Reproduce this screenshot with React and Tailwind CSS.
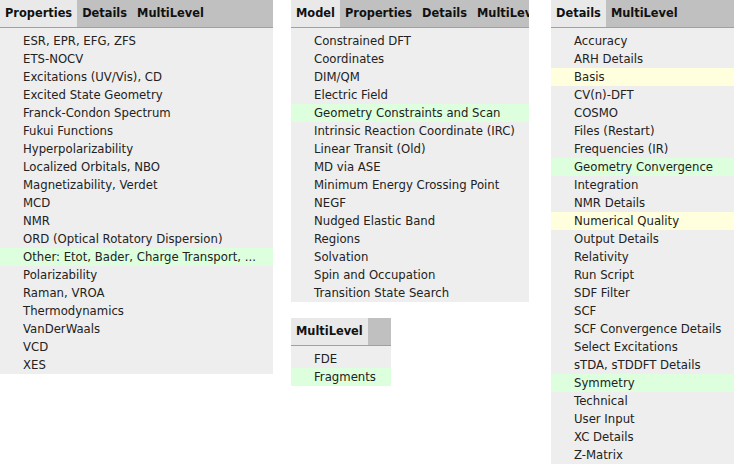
import React from 'react'

const Panel = ({ tabs, items, width, className = '' }) => {
    return (
        <div className={`flex flex-col bg-[#eeeeee] shrink-0 overflow-hidden ${className}`} style={{ width }}>
            <div className="flex h-[28px] bg-[#c0c0c0] border-b border-[#a0a0a0] overflow-hidden whitespace-nowrap">
                {tabs.map((t, i) => (
                    <div key={t} className={`shrink-0 px-[5px] pt-[1px] h-full flex items-center font-bold text-[11.4px] text-[#111] ${i === 0 ? 'bg-[#e9e9e9]' : ''}`}>
                        {t}
                    </div>
                ))}
            </div>
            <ul className="pt-[4px]">
                {items.map(([label, hl]) => (
                    <li key={label} className={`h-[18px] pl-[23px] pt-[1px] flex items-center text-[11.7px] text-[#222] whitespace-nowrap ${hl === 'g' ? 'bg-[#ddffdd]' : hl === 'y' ? 'bg-[#ffffdd]' : ''}`}>
                        {label}
                    </li>
                ))}
            </ul>
        </div>
    )
}

const properties = [
    ['ESR, EPR, EFG, ZFS'], ['ETS-NOCV'], ['Excitations (UV/Vis), CD'], ['Excited State Geometry'],
    ['Franck-Condon Spectrum'], ['Fukui Functions'], ['Hyperpolarizability'], ['Localized Orbitals, NBO'],
    ['Magnetizability, Verdet'], ['MCD'], ['NMR'], ['ORD (Optical Rotatory Dispersion)'],
    ['Other: Etot, Bader, Charge Transport, ...', 'g'], ['Polarizability'], ['Raman, VROA'],
    ['Thermodynamics'], ['VanDerWaals'], ['VCD'], ['XES'],
]

const model = [
    ['Constrained DFT'], ['Coordinates'], ['DIM/QM'], ['Electric Field'],
    ['Geometry Constraints and Scan', 'g'], ['Intrinsic Reaction Coordinate (IRC)'], ['Linear Transit (Old)'],
    ['MD via ASE'], ['Minimum Energy Crossing Point'], ['NEGF'], ['Nudged Elastic Band'], ['Regions'],
    ['Solvation'], ['Spin and Occupation'], ['Transition State Search'],
]

const multi = [['FDE'], ['Fragments', 'g']]

const details = [
    ['Accuracy'], ['ARH Details'], ['Basis', 'y'], ['CV(n)-DFT'], ['COSMO'], ['Files (Restart)'],
    ['Frequencies (IR)'], ['Geometry Convergence', 'g'], ['Integration'], ['NMR Details'],
    ['Numerical Quality', 'y'], ['Output Details'], ['Relativity'], ['Run Script'], ['SDF Filter'],
    ['SCF'], ['SCF Convergence Details'], ['Select Excitations'], ['sTDA, sTDDFT Details'],
    ['Symmetry', 'g'], ['Technical'], ['User Input'], ['XC Details'], ['Z-Matrix'],
]

export default function App() {
    return (
        <div className="w-[734px] h-[465px] bg-white overflow-hidden flex items-start font-['DejaVu_Sans',sans-serif]">
            <Panel tabs={['Properties', 'Details', 'MultiLevel']} items={properties} width={273} />
            <div className="flex flex-col gap-[16px] ml-[18px]">
                <Panel tabs={['Model', 'Properties', 'Details', 'MultiLevel']} items={model} width={238} />
                <Panel tabs={['MultiLevel']} items={multi} width={100} />
            </div>
            <Panel tabs={['Details', 'MultiLevel']} items={details} width={183} className="ml-[22px]" />
        </div>
    )
}
